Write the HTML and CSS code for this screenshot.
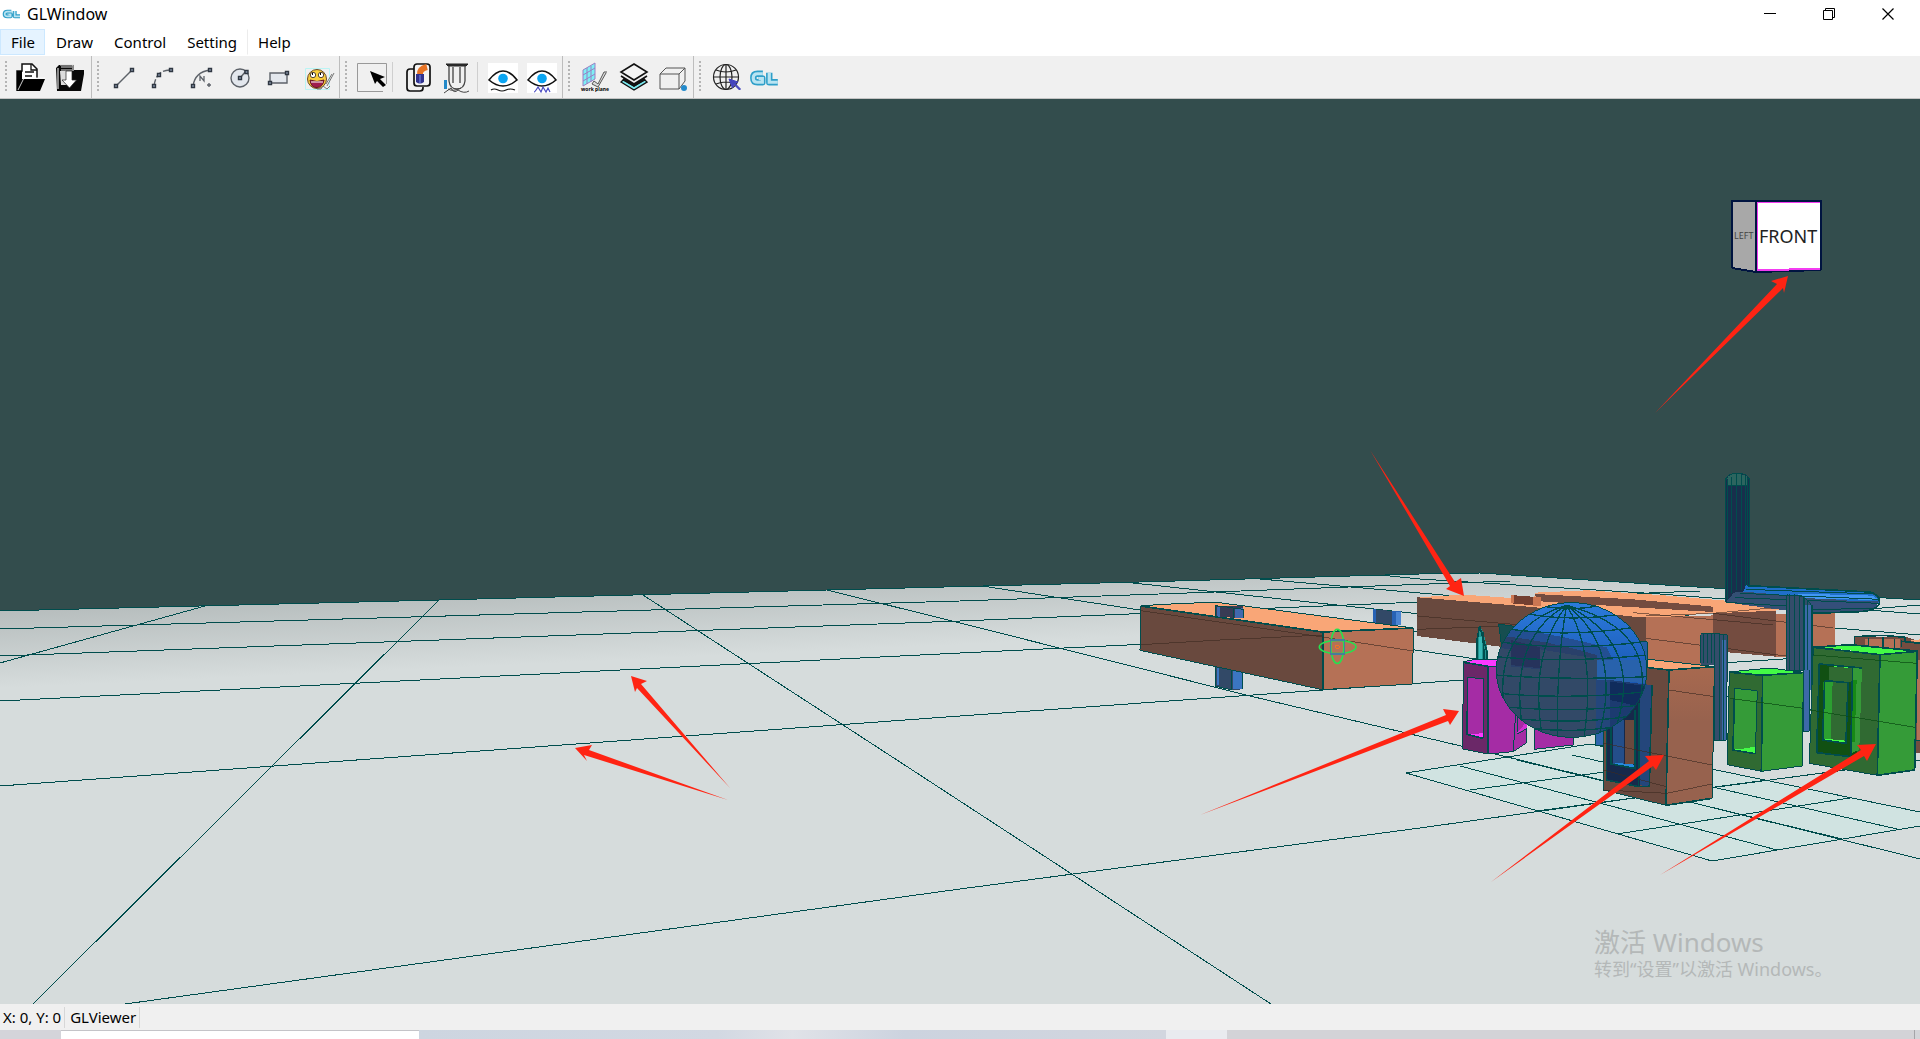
FILE: index.html
```html
<!DOCTYPE html>
<html lang="en">
<head>
<meta charset="utf-8">
<title>GLWindow</title>
<link rel="stylesheet" href="styles.css">
</head>
<body>
<header class="titlebar">
  <svg class="logo" viewBox="0 0 30 16"><g fill="none" stroke="#2f9fc9" stroke-width="6" stroke-linejoin="round"><path d="M14 4.500H8Q4 4.500 4 8T8 11.500H13V8.500H9.500M19 3.500V11.500H27"/></g><path d="M14 4.500H8Q4 4.500 4 8T8 11.500H13V8.500H9.500M19 3.500V11.500H27" fill="none" stroke="#b9e4f2" stroke-width="2.400"/></svg>
  <h1 class="title">GLWindow</h1>
  <div class="caption">
    <button class="cap" aria-label="Minimize"><svg viewBox="0 0 12 12"><path d="M0 5.500H12" stroke="#000"/></svg></button>
    <button class="cap" aria-label="Restore"><svg viewBox="0 0 12 12"><path d="M.5 2.500H9.500V11.500H.5ZM2.500 2.500V.5H11.500V9.500H9.500" fill="none" stroke="#000"/></svg></button>
    <button class="cap" aria-label="Close"><svg viewBox="0 0 12 12"><path d="M.5 .5L11.500 11.500M11.500 .5L.5 11.500" stroke="#000" stroke-width="1.200"/></svg></button>
  </div>
</header>
<nav class="menubar">
  <button class="menu active">File</button>
  <button class="menu">Draw</button>
  <button class="menu">Control</button>
  <button class="menu">Setting</button>
  <button class="menu last">Help</button>
</nav>
<div class="toolbars">
  <div class="bar files">
    <button class="tool" aria-label="Open"><svg viewBox="0 0 32 32"><path d="M3 29V9H8V2H18L23 7V16" fill="#fff" stroke="#111" stroke-width="1.500"/><path d="M17 2V8H23M11 10H20M11 14H18" fill="none" stroke="#111" stroke-width="1.300"/><path d="M3 29V9H8V17H31L26 29Z"/><path d="M4 28L10 16H31" fill="none" stroke="#fff" stroke-width=".8"/></svg></button>
    <button class="tool" aria-label="Save"><svg viewBox="0 0 32 32"><path d="M5 3H20V8H30V12L27 29H3L2 6Z" fill="#080808"/><path d="M6 3H19V9M4 8V6M7 5H18M7 8H18M4 6V27" stroke="#ddd" stroke-width="1.200" fill="none"/><path d="M6 9H18V23H7Z" fill="#ddd"/><path d="M12 9H18V18H22.500L15.500 26L8 18H12Z" fill="#fff" stroke="#222" stroke-width=".7"/></svg></button>
  </div>
  <div class="bar">
    <button class="tool" aria-label="Line"><svg viewBox="0 0 32 32" class="sk"><path d="M8 24L24 8"/><path class="k" d="M6.500 22.500h3v3h-3zM22.500 6.500h3v3h-3z"/></svg></button>
    <button class="tool" aria-label="Three point arc"><svg viewBox="0 0 32 32" class="sk"><path d="M7 24Q8 16 12 12T25 8" stroke-dasharray="7 2"/><path class="k" d="M5.500 22.500h3v3h-3zM10.500 11.500h3v3h-3zM22.500 6.500h3v3h-3z"/></svg></button>
    <button class="tool" aria-label="Arc"><svg viewBox="0 0 32 32" class="sk"><path d="M7 24Q9 10 24 8"/><path class="k" d="M5.500 22.500h3v3h-3zM22.500 6.500h3v3h-3z"/><path d="M14 19V14L18 19V14" stroke-width="1.300"/><path d="M21 23h4M23 21v4"/></svg></button>
    <button class="tool" aria-label="Circle"><svg viewBox="0 0 32 32" class="sk"><circle cx="15" cy="16" r="9" fill="#e3e7ed"/><path d="M15 16L21 9"/><path class="k" d="M13.500 14.500h3v3h-3zM20 8.500h3v3h-3z"/></svg></button>
    <button class="tool" aria-label="Rectangle"><svg viewBox="0 0 32 32" class="sk"><path d="M6 11H23V21H6Z" fill="#e3e7ed"/><path class="k" d="M4.500 19.500h3v3h-3zM21.500 9.500h3v3h-3z"/></svg></button>
    <button class="tool" aria-label="Texture brush"><svg viewBox="0 0 32 32"><path d="M2.500 6.500H26.500V27.500H2.500Z" fill="none" stroke="#baf4f4"/><circle cx="14" cy="17" r="9.500" fill="#f8cd3d" stroke="#6b4b24"/><path d="M7 18Q14 21 21 18Q20 25 14 25.500T7 18Z" fill="#a01d4e" stroke="#641323"/><path d="M8 20H20" stroke="#fff"/><circle cx="10" cy="13" r="2.700" fill="#fff" stroke="#543"/><circle cx="18" cy="13" r="2.700" fill="#fff" stroke="#543"/><path d="M9 12h1M17 12h1" stroke="#000" stroke-width="2"/><path d="M31 11L24 24M29 12L23 22M14 27H18L20 24L24 27L27 24" fill="none" stroke="#777"/></svg></button>
  </div>
  <div class="bar">
    <button class="tool" aria-label="Select"><svg viewBox="0 0 32 32"><path d="M30.500 22V1.500H1.500V29.500H27" fill="none" stroke="#999"/><path d="M14 9L29 15L24 17L30 23L27 25L21 19L19 22Z"/></svg></button>
    <i class="sep"></i>
    <button class="tool" aria-label="Material"><svg viewBox="0 0 32 32"><path d="M12 7H8Q5 7 5 10V26Q5 29 8 29H18Q21 29 21 26V25" fill="none" stroke="#111" stroke-width="1.700"/><rect x="12" y="2" width="16" height="22" rx="3" fill="#f4f4f4" stroke="#111" stroke-width="1.700"/><path d="M18 13Q17 7 25 5" fill="none" stroke="#e77324" stroke-width="6"/><path d="M14 12H22V20Q18 23 14 20Z" fill="#30328e"/><path d="M17 13H19V21H17Z" fill="#5660c0"/></svg></button>
    <button class="tool" aria-label="Extrude"><svg viewBox="0 0 32 32"><path d="M5 2H27L25 4H7Z" stroke="#222" fill="#333"/><path d="M8 4V19Q9 27 16 27T24 19V4M12 5V21M19 5V21" fill="none" stroke="#444" stroke-width="1.300"/><path d="M3 18H6V27H3Z" fill="#2489c8"/><path d="M3 31L10 26Q13 32 17 28Q23 32 28 29M7 27Q12 30 20 26" fill="none" stroke="#444"/></svg></button>
    <i class="sep"></i>
    <button class="tool" aria-label="Show"><svg viewBox="0 0 32 32"><path d="M1 1H31V31H1Z" fill="#fff"/><path d="M2 18Q9 9 16 9T30 18Q23 24 16 24T2 18Z" fill="#fff" stroke="#111" stroke-width="1.600"/><circle cx="16" cy="16.500" r="4.800" fill="#0ba5f2"/><path d="M4 28Q7 26 11 28T19 28T28 28" fill="none" stroke="#111" stroke-width="1.200"/></svg></button>
    <button class="tool" aria-label="Hide"><svg viewBox="0 0 32 32"><path d="M1 1H31V31H1Z" fill="#fff"/><path d="M2 18Q9 9 16 9T30 18Q23 24 16 24T2 18Z" fill="#fff" stroke="#111" stroke-width="1.600"/><circle cx="16" cy="16.500" r="4.800" fill="#0ba5f2"/><path d="M8 30Q9 30 12 25L15 30L17 25L20 30L22 26L24 30" fill="none" stroke="#4a4bc2" stroke-width="1.200"/></svg></button>
  </div>
  <div class="bar">
    <button class="tool" aria-label="Work plane"><svg viewBox="0 0 32 32"><path d="M4 8L16 1V17L4 24Z" fill="#7df0f5"/><path d="M4 8L16 1V17L4 24ZM8 6V22M12 4V20M4 13L16 6M4 19L16 12" fill="none" stroke="#9a7fc4"/><path d="M28 10H25L19 22L15 19L13 22L19 25L27 11" fill="#ddd" stroke="#555"/><text class="tiny" x="2" y="29">work plane</text></svg></button>
    <button class="tool" aria-label="Layers"><svg viewBox="0 0 32 32"><path d="M3 20L16 28L29 20L27 18L16 24L5 18Z" fill="#7beaf0" stroke="#111" stroke-width="1.400"/><path d="M3 14L16 22L29 14M5 17L16 24L27 17" fill="none" stroke="#111" stroke-width="1.600"/><path d="M16 2L29 10L16 18L3 10Z" fill="#f4f4f4" stroke="#111" stroke-width="1.600"/></svg></button>
    <button class="tool" aria-label="Box"><svg viewBox="0 0 32 32"><path d="M3 12L9 6H28L22 12ZM3 12V27H22V12M22 27L28 19V6" fill="none" stroke="#555"/><circle cx="27" cy="26" r="3" fill="#238acb"/></svg></button>
  </div>
  <div class="bar open">
    <button class="tool" aria-label="Globe"><svg viewBox="0 0 32 32"><g fill="none" stroke="#222" stroke-width="1.200"><circle cx="16" cy="15" r="12.500"/><ellipse cx="16" cy="15" rx="6" ry="12.500"/><path d="M16 2V28M3.500 15H28.500M6 8Q16 12 26 8M6 22Q16 18 26 22"/></g><path d="M19 17L28 20L25 21.500L30.500 27L29.500 28L24 22.500L22.500 26Z" fill="#4444bd" stroke="#4444bd"/></svg></button>
    <button class="tool" aria-label="GL"><svg viewBox="0 0 30 30"><g fill="none" stroke="#2f9fc9" stroke-width="6" stroke-linejoin="round"><path d="M13 11H8Q4 11 4 15T8 19H12.500V15.500H9M19 10V19H27"/></g><path d="M13 11H8Q4 11 4 15T8 19H12.500V15.500H9M19 10V19H27" fill="none" stroke="#b9e4f2" stroke-width="3"/></svg></button>
  </div>
</div>
<main class="viewer">
<svg class="scene" viewBox="0 99 1920 905" preserveAspectRatio="xMidYMid slice" shape-rendering="crispEdges">
  <defs>
    <linearGradient id="fog" gradientUnits="userSpaceOnUse" x1="0" y1="600" x2="4" y2="688"><stop offset="0" stop-color="#b2b9b9"/><stop offset="1" stop-color="#d6dcdc"/></linearGradient>
    <linearGradient id="ball" x1="0" y1="0" x2="0" y2="1"><stop offset="0" stop-color="#2c7bdc"/><stop offset=".5" stop-color="#1b5bb8"/><stop offset="1" stop-color="#15489c"/></linearGradient>
    <linearGradient id="side" x1="0" y1="0" x2="0" y2="1"><stop offset="0" stop-color="#a8694f"/><stop offset=".4" stop-color="#97624e"/></linearGradient>
    <clipPath id="ballclip"><ellipse cx="575" cy="330" rx="226" ry="202"/></clipPath>
  </defs>
  <path fill="#334d4d" d="M0 99H1920V1004H0Z"/>
  <path fill="url(#fog)" d="M0 611L439 600L827 590L1140 582L1420 574L1480 573L1680 586L1920 600V1004H0Z"/>
  <path fill="#d0e3e1" d="M1406 773L1590 744L1920 812V826L1712 861Z"/>
  <g class="ln">
    <path d="M0 611L439 600L827 590L1140 582L1420 574L1480 573L1680 586L1920 600"/>
    <path d="M0 629L960 601L1187 593L1510 581M0 656L960 621L1420 602L1700 591M0 701L960 653L1420 631L1700 616M0 786L960 716L1463 680L1920 650M125 1004L960 889L1420 828L1620 800L1920 760"/>
    <path d="M205 606L0 663M439 600L33 1004M643 595L900 762L1271 1004M827 590L960 623L1250 696L1520 760L1920 859M982 586L1140 610L1347 640L1653 685L1920 727M1133 583L1420 614L1640 638L1920 668M1260 579L1420 593L1640 612L1920 635M1380 575L1420 579L1660 594L1920 614M1870 609L1920 605"/>
    <path d="M1406 773L1590 744L1920 812M1406 773L1712 861L1920 826M1460 766L1777 850M1517 760L1842 839M1572 755L1897 829M1470 790L1680 762M1537 811L1767 780M1617 834L1850 798"/>
  </g>

  <g transform="translate(1120 560) scale(.3333)">
    <path fill="#324967" d="M284 310H370V388L336 390L284 378Z"/><path fill="#3b76c2" d="M340 320H370V386H340ZM290 318H298V375H290Z"/>
    <path class="e" d="M286 310V378M336 320V390M368 330V386M284 378L336 390"/>
    <path fill="#324967" d="M760 148L842 155V196H760Z"/><path fill="#2862b4" d="M760 148H768V190H760ZM816 153H842V196H816Z"/><path fill="#4b85d2" d="M828 155H842V196H828Z"/>
    <path fill="#f9a677" class="e" d="M62 137L190 130L290 127L880 204L607 215Z"/>
    <path fill="#69493e" d="M62 138L607 215V389L60 271Z"/>
    <path fill="#b57156" d="M607 215L880 204L878 372L607 389Z"/>
    <path class="e" d="M62 138L607 217M62 138L60 271L607 389L878 372L880 204L607 217V389"/>
    <path class="e thick" d="M62 138L607 216L880 204M609 217V389"/>
    <path fill="#383b54" d="M288 138H370V174L288 171Z"/><path fill="#4169ae" d="M346 144H370V174H346ZM290 140H299V170H290Z"/><path class="e" d="M286 138V170L340 177V143L286 137M340 144L370 148V173"/>
    <path class="shade" d="M62 152L607 231M62 254L300 240L607 225M607 231L880 273"/>
    <g fill="none" stroke="#27e04f" stroke-width="5" shape-rendering="auto"><ellipse cx="652" cy="259" rx="20" ry="51"/><ellipse cx="653" cy="261" rx="55" ry="20"/></g>
    <rect x="632" y="240" width="42" height="42" fill="none" stroke="#477d9b" stroke-width="4"/><circle cx="652" cy="261" r="6" fill="none" stroke="#f07525" stroke-width="3"/>
  </g>

  <g transform="translate(1640 460) scale(.3333)">
    <path fill="#69493e" d="M-668 412L-380 432L18 470L18 575L-420 560L-668 528Z"/>
    <path fill="#f9a677" d="M-668 412L-530 404L-300 420L18 448V472L-380 436Z"/>
    <path fill="#b57156" d="M18 470L585 460V565L437 590H408L219 570L200 625H18Z"/>
    <path fill="#744c40" d="M219 455L408 448V590L219 573Z"/>
    <path fill="#f9a677" d="M-315 398L-160 391L60 405L440 438L408 452L219 460L-20 470L-320 430Z"/>
    <path fill="#744c40" d="M-315 402L-20 418L219 440V456L-310 424Z"/>
    <path fill="#f9a677" d="M-300 424L219 458L100 470L-20 470L-300 440Z"/>
    <path fill="#733f31" d="M-388 405L-298 412V438L-388 430Z"/><path fill="#cb7652" d="M-322 410H-298V438H-322ZM-388 405H-378V430H-388Z"/>
    <path class="shade" d="M-668 468L-300 500M-668 508L-400 498M18 468L219 460L437 440M18 535L437 588M219 460L580 504M-20 458L400 495"/>

    <path fill="#182f4c" d="M258 55Q260 40 292 40T328 55V375L310 395V430L258 425Z"/>
    <path fill="#2c655f" d="M262 55Q265 42 292 42T324 55L320 78H266Z"/>
    <path class="e" d="M258 55V425M263 60V420M274 50V400M290 42V390M304 42V390M316 48V380M323 55V375M328 55V375M258 60Q258 40 292 40T328 60M262 78H324"/>
    <path fill="#334f73" d="M292 395L440 402L718 425L700 450L515 462L258 427L280 400Z"/>
    <path fill="#1f6fc9" d="M318 376L690 397L718 415V430L490 410L310 395Z"/>
    <path fill="#4297f3" d="M470 401L700 407L715 420L500 415Z"/>
    <path fill="#344f7a" d="M500 425L718 424L705 442L515 446Z"/>
    <path class="e thick" d="M322 377L690 396Q722 405 718 430Q710 452 660 455L518 460"/>
    <path class="e" d="M318 388L700 402M300 400L718 418M285 413L718 430M515 448L704 446M258 427L440 438"/>
    <path fill="#344d6b" d="M440 410Q465 395 500 420Q517 430 517 450V690H493V632H437Z"/><path fill="#3d69a8" d="M494 435H513V690H494Z"/>
    <path class="e" d="M440 405V632M450 403V632M464 403V632M478 405V632M492 410V690M504 420V690M517 435V690M437 632H492M440 405Q500 400 517 440"/>
    <path class="e thick" d="M493 415V690M517 438V690"/>
  </g>

  <g transform="translate(1620 620) scale(.3333)">
    <path fill="#344d6b" d="M242 42H322V130L318 362H285V135H242Z"/><path fill="#3d69a8" d="M305 60H318V360H305ZM550 150H566V334H550Z"/>
    <path class="e" d="M242 45V130M250 42V130M262 42V130M274 42V130M285 42V362M298 42V362M312 42V362M322 45V130L318 362H285M242 42Q280 35 322 45M552 150V334M568 150V334H550"/>
    <path fill="#744c40" d="M704 50L856 50L900 64V400H880V100H704Z"/><path fill="#b57156" d="M735 58H840V90H735ZM892 120H900V360H892Z"/><path fill="#f9a677" d="M868 62L900 58V68Z"/>
    <path class="e thick" d="M704 82V50L790 46L856 52V64M790 50V80M845 82V64L900 70"/><path class="e" d="M745 55V80M824 56V85M882 362H900"/>

    <path fill="#306a32" class="e" d="M328 156L428 166L424 454L322 434Z"/>
    <path fill="#359b38" class="e" d="M428 166L550 158L547 438L424 454Z"/>
    <path fill="#43fb46" class="e" d="M328 156L450 144L550 157L428 166Z"/>
    <path fill="#359b38" class="e" d="M344 205L412 212L406 401L339 389Z"/><path fill="#43fb46" d="M341 389L365 387L404 380V400Z"/>
    <path class="e thick" d="M330 157L428 166L548 158M428 166L424 452M344 205L339 390L406 401"/>

    <path fill="#306a32" class="e" d="M580 80L780 104L772 466L568 430Z"/>
    <path fill="#359b38" class="e" d="M780 104L892 94L884 450L772 466Z"/>
    <path fill="#43fb46" d="M612 82L700 74L892 92L780 102Z"/>
    <path class="e thick" d="M580 82L780 104L892 94L884 450L772 466L780 104M580 82L690 74L892 93"/>
    <path fill="#115012" d="M596 134L710 145V410L590 398Z"/><path fill="#359b38" d="M700 145H726L718 390L692 400Z"/><path fill="#168916" d="M696 180H710L704 365H692ZM610 185H626L620 358H608Z"/>
    <path fill="#306a32" d="M626 140H698V185H626ZM612 182L684 188L678 370L606 360Z"/><path fill="#2c9f31" d="M614 185H638L632 358H610Z"/>
    <path fill="#43fb46" d="M626 134L695 138V145L626 138ZM610 356L676 362V370L608 362Z"/>
    <path class="e thick" d="M598 132L726 144M598 132L590 398L692 410L698 145M614 182L684 188L678 370L608 360L614 182"/>
    <path class="greenline" d="M330 235L550 265M570 270L885 322M580 105L890 130"/>
  </g>

  <g transform="translate(1380 560) scale(.3333)">
    <path fill="#21948f" d="M290 235L298 198L310 215L324 275V302H290Z"/><path fill="#3abab8" d="M297 230H305V302H297Z"/><path class="e thick" d="M292 300V235L299 198L322 280V302M308 215L313 300"/>
    <path fill="#164e50" class="e" d="M356 192L410 200V260H365Z"/>
    <path fill="#6b2868" class="e" d="M250 308L324 320V582L248 567Z"/>
    <path fill="#a52ca5" class="e" d="M324 320L440 315V548L400 575L324 582Z"/>
    <path fill="#fb39ff" class="e" d="M250 305L280 299L380 300L420 318L324 320Z"/>
    <path fill="#a52ca5" class="e" d="M264 352L312 357L310 535L259 524Z"/><path fill="#fb39ff" d="M264 522L309 520V533Z"/>
    <path class="e thick" d="M250 307L324 319V582M263 352V524L310 535"/><path class="e" d="M408 440L400 575M412 455V522L440 506"/><path fill="#d22fd5" d="M412 518L440 485V504Z"/>
    <path fill="#a52ca5" class="e" d="M464 490L582 520L580 555L462 568Z"/>
    <path fill="#2f65ad" class="e" d="M646 450H670V558H646Z"/>
    <path fill="#69493e" d="M670 300L866 328L858 736L670 690Z"/>
    <path fill="url(#side)" d="M866 330L1003 318L997 715L858 736Z"/>
    <path fill="#f9a677" class="e" d="M780 295L1003 320L866 330L690 310Z"/>
    <path class="e" d="M670 450V690L858 736M1003 320L997 715"/>
    <path class="e thick" d="M867 330L858 736L997 715M780 320L866 330L1003 320"/>
    <path fill="#24467b" d="M684 370L816 374L808 680L680 660Z"/><path fill="#16294b" d="M682 370H780V680L680 660Z"/>
    <path fill="#69493e" d="M734 480H766V612H734Z"/><path fill="#244e8a" d="M700 480H732V612H700Z"/><path fill="#2688dc" d="M705 608L764 614V625L710 618Z"/>
    <path class="e thick" d="M680 480V660L776 680L778 430M694 490V612L766 626V450M816 374L808 680H776"/>
    <path fill="#245da5" class="e" d="M650 230L802 246V320L760 400H650Z"/>

    <ellipse cx="575" cy="330" rx="226" ry="202" fill="url(#ball)"/>
    <g clip-path="url(#ballclip)">
      <path fill="#234f92" d="M340 200Q500 215 680 262L700 300H340Z"/>
      <path fill="#29406a" d="M340 225Q500 240 650 285V350H340Z"/>
      <path fill="#324967" d="M340 262L392 268V320L480 328V268L650 296L690 310L700 560H340Z"/>
      <path fill="#26335c" d="M392 240L480 262V325L392 315Z"/>
      <path fill="#2862ac" d="M650 300H810V370L650 360Z"/>
      <path fill="#24467b" d="M648 360H700V560H648Z"/>
      <path fill="#1c3b70" d="M690 360L810 375V560H690Z"/>
      <path fill="#102c5c" d="M690 365L800 378L780 440L690 420Z"/>
      <path class="e mesh" d="M415 155Q560 190 735 160M375 205Q560 235 775 200M355 245Q560 275 795 245M348 290Q560 310 802 285M345 345Q560 362 805 350M355 400Q570 420 800 395M370 440Q570 460 785 435M400 475Q580 495 755 468M440 504Q580 520 710 500M480 136Q560 155 655 138"/>
      <path class="e mesh" d="M560 136Q350 200 370 420M560 136Q390 230 425 490M560 136Q450 280 484 515M560 136Q530 300 532 532M560 136Q650 280 612 532M560 136Q725 260 660 515M560 136Q790 250 710 495M560 136Q840 210 775 440"/>
    </g>
    <ellipse class="e" cx="575" cy="330" rx="226" ry="202"/>
    <path class="shade" d="M670 630L858 680M670 550L997 615M866 390L1003 410M670 690L860 700L997 672"/>
  </g>

  <g fill="#ff2413" shape-rendering="auto">
    <path d="M1788 276L1771 281L1777 284L1655 413L1783 288L1784 293Z"/>
    <path d="M1464 596L1461 578L1455 582L1370 450L1450 586L1446 589Z"/>
    <path d="M631 676L647 681L641 684L730 788L637 688L635 692Z"/>
    <path d="M575 748L592 745L589 750L728 800L584 755L587 761Z"/>
    <path d="M1459 711L1443 709L1446 715L1200 815L1448 721L1450 725Z"/>
    <path d="M1664 755L1645 756L1649 761L1491 882L1653 766L1656 770Z"/>
    <path d="M1876 744L1857 745L1861 750L1660 875L1864 756L1867 761Z"/>
  </g>

  <path fill="#a8a8a8" stroke="#8e4890" d="M1732 201H1755V272L1732 268Z"/>
  <path fill="#fff" stroke="#f33cf1" d="M1757 202H1820V270H1757Z"/>
  <path fill="none" stroke="#001440" stroke-width="2" d="M1732 268V201H1821V270M1756 201V272L1732 268M1756 272L1821 270"/>
  <path stroke="#f33cf1" stroke-width="2" d="M1758 270L1820 269"/>
  <text class="face" x="1759" y="243">FRONT</text>
  <text class="face left" x="1734" y="239">LEFT</text>
</svg>
<div class="watermark"><p class="wm-big">激活 Windows</p><p class="wm-small">转到“设置”以激活 Windows。</p></div>
</main>
<footer class="status"><span class="cell">X: 0, Y: 0</span><span class="cell">GLViewer</span></footer>
<div class="taskbar"><i class="start"></i><i class="search"></i><i class="apps"></i><i class="current"></i><i class="tray"></i><i class="desk"></i></div>
</body>
</html>
```
FILE: styles.css
```css
* { box-sizing: border-box; }
html, body { height: 100%; margin: 0; }
body {
  display: flex;
  flex-direction: column;
  overflow: hidden;
  background: #fff;
  color: #000;
  font-family: "Noto Sans", "Noto Sans CJK SC", sans-serif;
  font-size: 15px;
}
button {
  margin: 0;
  padding: 0;
  border: 0;
  background: none;
  color: inherit;
  font: inherit;
}
svg { display: block; }
.titlebar { display: flex; align-items: center; height: 28px; flex: none; }
.logo { width: 20px; height: 12px; margin: 0 5px 0 2px; }
.title { margin: 0; font-size: 16px; font-weight: 400; line-height: 28px; }
.caption { display: flex; margin-left: auto; padding-right: 3px; }
.cap { display: flex; align-items: center; justify-content: center; width: 59px; height: 28px; }
.cap svg { width: 12px; height: 12px; }

.menubar { display: flex; height: 28px; flex: none; padding-top: 1px; }
.menu { padding: 0 9px 0 10px; height: 26px; line-height: 24px; border: 1px solid transparent; }
.menu.active { background: #e5f3ff; border-color: #cce8ff; }
.menu.last { border-left-color: #ececec; }

.toolbars { display: flex; height: 43px; flex: none; background: #f0f0f0; border-bottom: 1px solid #c4c4c4; }
.bar {
  position: relative;
  display: flex;
  align-items: center;
  padding: 0 1px 0 12px;
  border-right: 1px solid #bdbdbd;
}
.bar.files { padding-left: 10px; }
.bar.files .tool { width: 40px; }
.bar.open { border-right: 0; }
.bar::before {
  content: "";
  position: absolute;
  left: 5px;
  top: 5px;
  bottom: 5px;
  width: 2px;
  background: repeating-linear-gradient(#b4b4b4 0 2px, transparent 2px 4px);
}
.tool { display: flex; align-items: center; justify-content: center; width: 39px; height: 40px; padding-top: 2px; }
.tool svg { width: 32px; height: 32px; }
.sep { width: 6px; height: 30px; border-left: 1px solid #cfcfcf; margin-left: 1px; }
.sk { fill: none; stroke: #5d6269; stroke-width: 1.400; }
.sk .k { fill: #8d9bb0; stroke: #2f3742; }
.tiny { font-size: 5px; font-weight: 700; }

.viewer { position: relative; flex: 1; min-height: 0; background: #334d4d; }
.scene { width: 100%; height: 100%; }
.ln path { fill: none; stroke: #004d4d; stroke-width: 1; }
.e { stroke: #004d4d; stroke-width: 3; }
path.e:not([fill]), ellipse.e { fill: none; }
.e.thick { stroke-width: 5; }
.e.mesh { stroke-width: 4; }
.shade { fill: none; stroke: #3c2a22; stroke-opacity: .6; stroke-width: 3; }
.greenline { fill: none; stroke: #0a4a12; stroke-opacity: .7; stroke-width: 3; }
.face { font-size: 18px; fill: #222; }
.face.left { font-size: 9px; fill: #444; }
.watermark { position: absolute; right: 92px; bottom: 23px; width: 234px; color: #b4b8b8; white-space: nowrap; }
.watermark p { margin: 0; }
.wm-big { font-size: 26px; line-height: 30px; }
.wm-small { font-size: 18px; line-height: 24px; }

.status { display: flex; align-items: center; height: 26px; flex: none; background: #f0f0f0; font-size: 15px; }
.cell { padding: 0 3px; line-height: 21px; border-right: 1px solid #d7d7d7; }
.cell + .cell { padding-left: 5px; }
.taskbar { display: flex; height: 9px; flex: none; background: #d3d4d8; }
.start { width: 61px; background: #d4d4da; }
.search { width: 358px; background: #fff; border-top: 1px solid #c4c4c8; }
.apps { flex: 1; background: linear-gradient(90deg, #cdd5e0, #d2d8e2 40%, #e0e2e8 50%, #ccd3df 65%, #d2d6df); }
.current { width: 61px; background: #e9ebef; }
.tray { width: 687px; background: #d3d3d7; }
.desk { width: 6px; border-left: 1px solid #a4a4a8; }
```
